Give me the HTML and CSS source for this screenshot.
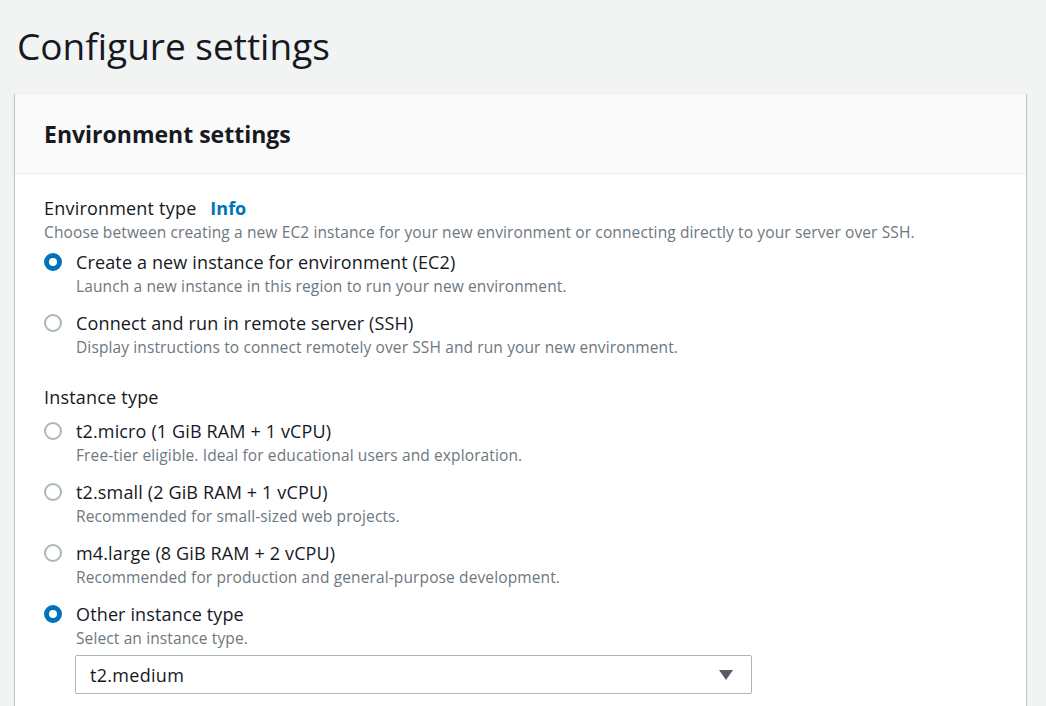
FILE: index.html
```html
<!DOCTYPE html>
<html lang="en">
<head>
<meta charset="utf-8">
<title>Configure settings</title>
<link rel="stylesheet" href="styles.css">
</head>
<body>
<main class="page">
  <h1 class="page-title">Configure settings</h1>
  <section class="card">
    <header class="card-header">
      <h2 class="card-title">Environment settings</h2>
    </header>
    <div class="card-body">
      <div class="field">
        <div class="field-label">Environment type <a class="info" href="#">Info</a></div>
        <div class="field-desc">Choose between creating a new EC2 instance for your new environment or connecting directly to your server over SSH.</div>
        <div class="options first">
          <div class="option">
            <span class="radio checked"></span>
            <div class="option-text">
              <div class="option-label">Create a new instance for environment (EC2)</div>
              <div class="option-desc">Launch a new instance in this region to run your new environment.</div>
            </div>
          </div>
          <div class="option">
            <span class="radio"></span>
            <div class="option-text">
              <div class="option-label">Connect and run in remote server (SSH)</div>
              <div class="option-desc">Display instructions to connect remotely over SSH and run your new environment.</div>
            </div>
          </div>
        </div>
      </div>
      <div class="field field-2">
        <div class="field-label">Instance type</div>
        <div class="options second">
          <div class="option">
            <span class="radio"></span>
            <div class="option-text">
              <div class="option-label">t2.micro (1 GiB RAM + 1 vCPU)</div>
              <div class="option-desc">Free-tier eligible. Ideal for educational users and exploration.</div>
            </div>
          </div>
          <div class="option">
            <span class="radio"></span>
            <div class="option-text">
              <div class="option-label">t2.small (2 GiB RAM + 1 vCPU)</div>
              <div class="option-desc">Recommended for small-sized web projects.</div>
            </div>
          </div>
          <div class="option">
            <span class="radio"></span>
            <div class="option-text">
              <div class="option-label">m4.large (8 GiB RAM + 2 vCPU)</div>
              <div class="option-desc">Recommended for production and general-purpose development.</div>
            </div>
          </div>
          <div class="option">
            <span class="radio checked"></span>
            <div class="option-text">
              <div class="option-label">Other instance type</div>
              <div class="option-desc">Select an instance type.</div>
              <div class="select">
                <span class="select-value">t2.medium</span>
                <svg class="caret" width="14" height="10" viewBox="0 0 14 10"><path d="M0 0 H14 L7 10 Z" fill="#545b64"/></svg>
              </div>
            </div>
          </div>
        </div>
      </div>
    </div>
  </section>
</main>
</body>
</html>
```
FILE: styles.css
```css
* { box-sizing: border-box; }
html, body { margin: 0; padding: 0; }
body {
  background: #f2f3f3;
  font-family: "Open Sans", Lato, "Liberation Sans", sans-serif;
  color: #16191f;
  height: 706px;
  overflow: hidden;
}
.page {
  padding: 0 20px 0 15px;
}
.page-title {
  margin: 0;
  padding: 23px 0 0 2px;
  height: 93px;
  font-size: 37px;
  font-weight: 400;
  line-height: 46px;
}
.card {
  background: #fff;
  width: 1011px;
  box-shadow: 0 1px 1px 0 rgba(0,28,36,.3), 1px 1px 1px 0 rgba(0,28,36,.15), -1px 1px 1px 0 rgba(0,28,36,.15);
  border-top: 1px solid #eaeded;
}
.card-header {
  background: #fafafa;
  border-bottom: 1px solid #eaeded;
  height: 80px;
  padding: 0 29px;
  display: flex;
  align-items: center;
}
.card-title {
  margin: 0;
  font-size: 23px;
  font-weight: 700;
  line-height: 28px;
  padding-top: 0;
}
.card-body {
  padding: 22px 29px 40px 29px;
}
.field-label {
  font-size: 18px;
  line-height: 24px;
  letter-spacing: 0.2px;
  color: #16191f;
}
.info {
  color: #0073bb;
  font-weight: 700;
  text-decoration: none;
  margin-left: 9px;
  letter-spacing: 0;
}
.field-desc, .option-desc {
  font-size: 15.5px;
  line-height: 24px;
  letter-spacing: 0.12px;
  color: #6d7780;
}
.options {
  display: flex;
  flex-direction: column;
  gap: 13px;
}
.options.first { margin-top: 6px; }
.options.second { margin-top: 10px; }
.field-2 { margin-top: 26px; }
.option {
  display: flex;
  align-items: flex-start;
}
.radio {
  flex: none;
  width: 18px;
  height: 18px;
  border-radius: 50%;
  border: 2px solid #aab7b8;
  margin-top: 3px;
  margin-right: 14px;
  background: #fff;
}
.radio.checked {
  border: 5px solid #0073bb;
}
.option-label {
  font-size: 18px;
  line-height: 24px;
  letter-spacing: 0.14px;
}
.select {
  margin-top: 5px;
  margin-left: -1px;
  width: 677px;
  height: 39px;
  border: 1px solid #aab7b8;
  border-radius: 2px;
  display: flex;
  align-items: center;
  justify-content: space-between;
  padding: 0 18px 0 14px;
  font-size: 18px;
  letter-spacing: 0.3px;
}
.caret { display: block; }
```
